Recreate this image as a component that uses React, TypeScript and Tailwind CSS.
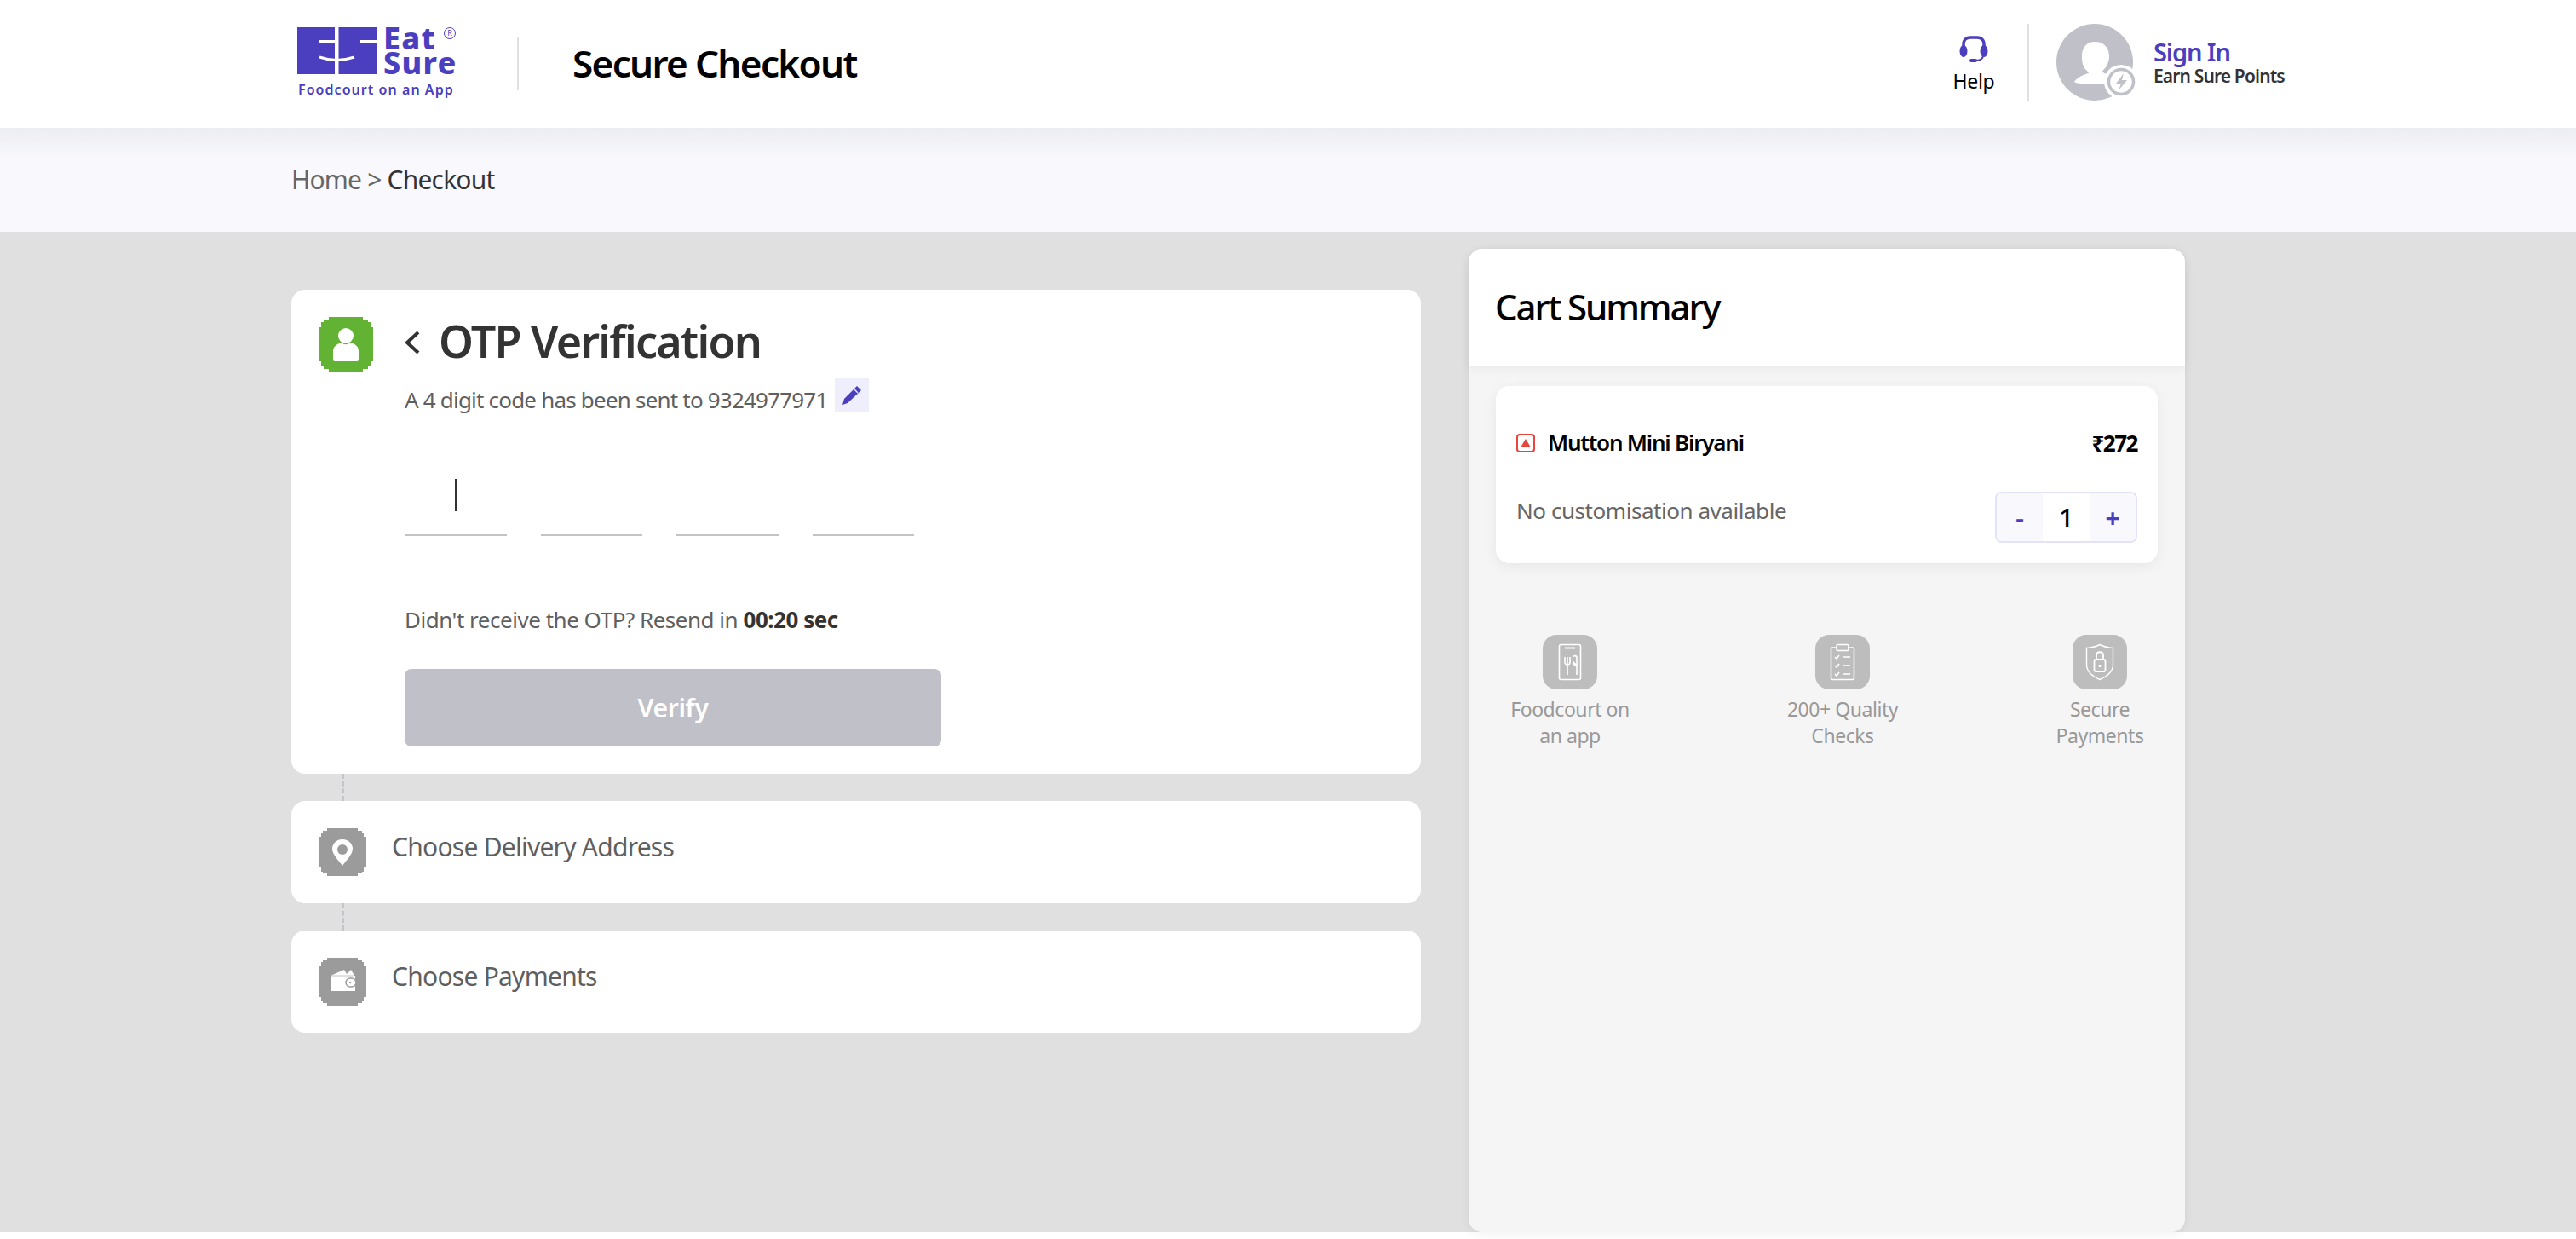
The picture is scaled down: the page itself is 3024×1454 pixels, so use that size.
import React from 'react';

const FONT = 'font-["Noto_Sans","Open_Sans",sans-serif]';

// stepped blob behind the section icons
function Blob({ color, size, children }: { color: string; size: string; children: React.ReactNode }) {
  return (
    <div className={`relative shrink-0 ${size}`}>
      <svg viewBox="0 0 100 100" className="absolute inset-0 h-full w-full" shapeRendering="crispEdges">
        <polygon
          fill={color}
          points="18,0 82,0 82,5 91,5 91,9 95,9 95,18 100,18 100,82 95,82 95,91 91,91 91,95 82,95 82,100 18,100 18,95 9,95 9,91 5,91 5,82 0,82 0,18 5,18 5,9 9,9 9,5 18,5"
        />
      </svg>
      {children}
    </div>
  );
}

function Logo() {
  return (
    <div className="mb-[4px] flex w-[190px] flex-col">
      <div className="flex items-start">
        <svg width="94" height="55" viewBox="0 0 94 55" className="shrink-0">
          <rect width="94" height="55" fill="#4b3fbf" />
          <rect x="44" width="4.5" height="55" fill="#fff" />
          <rect x="26" y="15" width="18" height="3" fill="#fff" />
          <rect x="74" y="15" width="20" height="3" fill="#fff" />
          <path d="M26 35 Q46 42 67 35" fill="none" stroke="#fff" strokeWidth="3" />
        </svg>
        <div className="relative ml-[7px] -mt-[2px] text-[36px] font-extrabold leading-[29px] tracking-[1.3px] text-[#4b3fbf]">
          <div>Eat</div>
          <div>Sure</div>
          <div className="absolute left-[71px] top-[2px] flex h-[14px] w-[14px] items-center justify-center rounded-full border border-[#4b3fbf] text-[9px] font-normal leading-none tracking-normal">
            R
          </div>
        </div>
      </div>
      <div className="mt-[7px] pl-[1px] text-[16px] font-semibold leading-[20px] tracking-[1.05px] text-[#4b3fbf]">
        Foodcourt on an App
      </div>
    </div>
  );
}

function Headset() {
  return (
    <svg width="34" height="32" viewBox="0 0 34 32" fill="none">
      <path d="M5 17V10C5 4.5 9 2 13 2H21C25 2 29 4.5 29 10V17" stroke="#4b3fbf" strokeWidth="3.5" />
      <ellipse cx="5" cy="18" rx="4.5" ry="7" fill="#4b3fbf" />
      <ellipse cx="29" cy="18" rx="4.5" ry="7" fill="#4b3fbf" />
      <path d="M28 24C27 28 24 29 19 29" stroke="#4b3fbf" strokeWidth="2" />
      <rect x="12" y="27" width="9" height="4" rx="2" fill="#4b3fbf" />
    </svg>
  );
}

function Avatar() {
  return (
    <svg width="94" height="90" viewBox="0 0 94 90" className="shrink-0">
      <circle cx="45" cy="45" r="45" fill="#bfc0c8" />
      <path
        d="M45 21C55 21 62 27 62 38C62 46 58 52 54 55L56 58C65 60 72 63 75 68C65 71 25 72 21 68C24 63 33 59 38 58L36 55C31 51 30 45 30 38C30 27 36 21 45 21Z"
        fill="#fff"
      />
      <circle cx="76" cy="68" r="20" fill="#fff" />
      <circle cx="76" cy="68" r="14.5" fill="none" stroke="#bfc0c8" strokeWidth="3.5" />
      <path d="M79 58L70 70H76L73 78L83 66H77Z" fill="#bfc0c8" />
    </svg>
  );
}

function StepCard({ label, icon }: { label: string; icon: React.ReactNode }) {
  return (
    <div className="relative flex h-[120px] items-start rounded-2xl bg-white pl-[32px] pt-[32px]">
      <Blob color="#9b9b9b" size="h-[56px] w-[56px]">
        {icon}
      </Blob>
      <div className="ml-[30px] -mt-[1px] text-[30px] leading-[46px] tracking-[-0.75px] text-[#5f5f5f]">{label}</div>
      <div className="absolute left-[60px] top-[-32px] h-[32px] border-l-2 border-dashed border-[#c4c4cc]" />
    </div>
  );
}

function Feature({ label, second, icon, className }: { label: string; second: string; icon: React.ReactNode; className: string }) {
  return (
    <div className={`flex w-[160px] flex-col items-center text-center ${className}`}>
      <div className="flex h-16 w-16 items-center justify-center rounded-2xl bg-[#bdbdbd]">{icon}</div>
      <div className="mt-[8px] text-[23px] leading-[31px] tracking-[-0.45px] text-[#999]">
        <div>{label}</div>
        <div>{second}</div>
      </div>
    </div>
  );
}

export default function App() {
  return (
    <div className={`h-[1454px] overflow-hidden bg-white ${FONT}`}>
      {/* top bar */}
      <header className="flex h-[150px] items-center pl-[349px] pr-[343px]">
        <Logo />
        <div className="ml-[68px] h-[62px] w-[2px] bg-[#e0e0e0]" />
        <h1 className="ml-[63px] -mt-[2px] text-[44px] font-semibold leading-none tracking-[-1.65px] text-black">Secure Checkout</h1>
        <div className="ml-auto flex w-[94px] flex-col items-center">
          <Headset />
          <div className="mt-[7px] text-[23px] leading-[28px] tracking-[-0.3px] text-black">Help</div>
        </div>
        <div className="ml-[16px] -mt-[4px] h-[90px] w-[2px] bg-[#e0e0e0]" />
        <div className="ml-[32px] -mt-[4px] flex items-center">
          <Avatar />
          <div className="ml-[20px] w-[153px] whitespace-nowrap">
            <div className="text-[29px] font-semibold leading-[32px] tracking-[-1.1px] text-[#4b3fbf]">Sign In</div>
            <div className="text-[21px] font-semibold leading-[24px] tracking-[-0.85px] text-[#333]">Earn Sure Points</div>
          </div>
        </div>
      </header>

      {/* breadcrumb */}
      <div className="flex h-[122px] items-center bg-gradient-to-b from-[#ecedf2] via-[#f8f8fd] via-30% to-[#f8f8fd] pb-[2px] pl-[342px] text-[30px] tracking-[-0.8px]">
        <span className="text-[#666]">Home &gt;&nbsp;</span>
        <span className="text-[#333]">Checkout</span>
      </div>

      <main className="flex h-[1174px] gap-[56px] bg-[#e0e0e0] pl-[342px]">
        {/* left column */}
        <div className="flex w-[1326px] flex-col gap-[32px] pt-[68px]">
          <section className="h-[568px] rounded-2xl bg-white pl-[32px] pt-[32px]">
            <div className="flex">
              <Blob color="#62b233" size="h-16 w-16">
                <svg viewBox="0 0 64 64" className="absolute inset-0 h-full w-full">
                  <circle cx="32" cy="22" r="9" fill="#fff" />
                  <path d="M17 50V40C17 34 23 31 27 30C30 33 34 33 37 30C42 31 47 34 47 40V50C47 51 46 52 45 52H19C18 52 17 51 17 50Z" fill="#fff" />
                </svg>
              </Blob>
              <div className="ml-[37px] -mt-[8px] flex flex-col">
                <div className="flex items-center">
                  <svg width="18" height="28" viewBox="0 0 18 28" fill="none" className="mt-[4px]">
                    <path d="M16 2L3 14L16 26" stroke="#333" strokeWidth="4" />
                  </svg>
                  <h2 className="ml-[22px] text-[52px] font-semibold leading-[72px] tracking-[-1.7px] text-[#333]">OTP Verification</h2>
                </div>
                <div className="flex items-start">
                  <div className="mt-[15px] text-[26px] leading-[36px] tracking-[-0.8px] text-[#5f5f5f]">A 4 digit code has been sent to 9324977971</div>
                  <div className="ml-[8px] mt-[8px] flex h-[40px] w-[40px] items-center justify-center bg-[#eeeefc]">
                    <svg width="24" height="24" viewBox="0 0 24 24">
                      <path d="M18 1L23 6L7 21L1 23L3 16Z" fill="#4b3fbf" />
                      <path d="M15 5L19 9" stroke="#eeeefc" strokeWidth="1.5" />
                    </svg>
                  </div>
                </div>
              </div>
            </div>

            <div className="ml-[101px]">
              <div className="mt-[73px] flex gap-[40px]">
                <div className="relative h-[69px] w-[120px] border-b-2 border-[#c4c4c4]">
                  <div className="absolute left-[59px] top-[2px] h-[38px] w-[2px] bg-[#333]" />
                </div>
                <div className="h-[69px] w-[119px] border-b-2 border-[#c4c4c4]" />
                <div className="h-[69px] w-[120px] border-b-2 border-[#c4c4c4]" />
                <div className="h-[69px] w-[119px] border-b-2 border-[#c4c4c4]" />
              </div>
              <div className="mt-[80px] text-[26px] leading-[36px] tracking-[-0.48px] text-[#5f5f5f]">
                Didn't receive the OTP? Resend in <span className="font-bold text-[#333]">00:20 sec</span>
              </div>
              <button className="mt-[40px] flex h-[91px] w-[630px] items-center justify-center rounded-lg bg-[#bfc0c8] text-[30px] font-semibold tracking-[-0.3px] text-white">
                Verify
              </button>
            </div>
          </section>

          <StepCard
            label="Choose Delivery Address"
            icon={
              <svg viewBox="0 0 56 56" className="absolute inset-0 h-full w-full">
                <path d="M28 13C20 13 16 19 16 24C16 31 24 38 28 44C32 38 40 31 40 24C40 19 36 13 28 13Z" fill="#fff" />
                <circle cx="28" cy="25" r="6" fill="#9b9b9b" />
              </svg>
            }
          />
          <StepCard
            label="Choose Payments"
            icon={
              <svg viewBox="0 0 56 56" className="absolute inset-0 h-full w-full">
                <path d="M14 21L30 14L33 19L38 14L42 21H43V39H14Z" fill="#fff" />
                <path d="M14 21H42" stroke="#9b9b9b" strokeWidth="0.6" />
                <rect x="32" y="24" width="12" height="10" rx="5" fill="#fff" stroke="#9b9b9b" strokeWidth="1.5" />
                <circle cx="37" cy="29" r="1.2" fill="#9b9b9b" />
              </svg>
            }
          />
        </div>

        {/* cart summary */}
        <aside className="mt-[20px] h-[1154px] w-[841px] rounded-2xl bg-[#f5f5f5] shadow-[0_2px_12px_rgba(0,0,0,0.06)]">
          <div className="flex h-[137px] items-center rounded-t-2xl bg-white pl-[31px] shadow-[0_4px_14px_rgba(0,0,0,0.05)]">
            <h3 className="-mt-[2px] text-[42px] font-medium leading-none tracking-[-2.1px] text-black">Cart Summary</h3>
          </div>
          <div className="mx-[32px] mt-[24px] h-[208px] rounded-2xl bg-white px-[24px] pt-[54px] shadow-[0_4px_16px_rgba(0,0,0,0.06)]">
            <div className="flex items-center justify-between">
              <div className="flex items-center">
                <div className="flex h-[22px] w-[22px] items-center justify-center rounded-[4px] border-2 border-[#e8453c]">
                  <div className="h-0 w-0 border-x-[6px] border-b-[10px] border-x-transparent border-b-[#e8453c]" />
                </div>
                <div className="ml-[15px] -mt-[2px] text-[26px] font-semibold leading-[26px] tracking-[-1.2px] text-black">Mutton Mini Biryani</div>
              </div>
              <div className="text-[26px] font-bold leading-[26px] tracking-[-1.5px] text-black">₹272</div>
            </div>
            <div className="mt-[44px] flex items-start justify-between">
              <div className="mt-[4px] text-[26px] leading-[36px] tracking-[-0.45px] text-[#666]">No customisation available</div>
              <div className="flex h-[60px] w-[167px] items-stretch overflow-hidden rounded-lg border-2 border-[#e2e2fa]">
                <div className="flex w-[54px] items-center justify-center bg-[#f8f8fd] text-[30px] font-bold text-[#4b3fbf]">-</div>
                <div className="flex flex-1 items-center justify-center bg-white text-[30px] font-medium text-black">1</div>
                <div className="flex w-[54px] items-center justify-center bg-[#f8f8fd] text-[30px] font-bold text-[#4b3fbf]">+</div>
              </div>
            </div>
          </div>

          <div className="mt-[84px] flex">
            <Feature
              label="Foodcourt on"
              second="an app"
              className="ml-[39px]"
              icon={
                <svg width="28" height="44" viewBox="0 0 28 44" fill="none" stroke="#fff" strokeWidth="1.6">
                  <rect x="1.5" y="1.5" width="25" height="41" rx="2" />
                  <path d="M8 5.5H20" strokeWidth="2" />
                  <path d="M8 16V22C8 24 9.5 25 11 25C12.5 25 14 24 14 22V16M11 16V37" />
                  <path d="M18 16C18 14 22 14 22 17V37M22 26C19 26 18 24 18 22Z" />
                </svg>
              }
            />
            <Feature
              label="200+ Quality"
              second="Checks"
              className="ml-[160px]"
              icon={
                <svg width="30" height="44" viewBox="0 0 30 44" fill="none" stroke="#fff" strokeWidth="1.6">
                  <path d="M9 5H3C2 5 1.5 5.5 1.5 6.5V41C1.5 42 2 42.5 3 42.5H27C28 42.5 28.5 42 28.5 41V6.5C28.5 5.5 28 5 27 5H21" />
                  <rect x="8" y="1.5" width="14" height="7" rx="1.5" />
                  <path d="M6 16L8 18L11 14M15 16H24M6 26L8 28L11 24M15 26H24M6 36L8 38L11 34M15 36H24" />
                </svg>
              }
            />
            <Feature
              label="Secure"
              second="Payments"
              className="ml-[142px]"
              icon={
                <svg width="36" height="44" viewBox="0 0 36 44" fill="none" stroke="#fff" strokeWidth="1.4">
                  <path d="M18 1.5C23 4 28 5 33.5 5.5V25C33.5 33 26 39 18 42.5C10 39 2.5 33 2.5 25V5.5C8 5 13 4 18 1.5Z" />
                  <rect x="11.5" y="19" width="13" height="14" rx="2" strokeWidth="1.8" />
                  <path d="M14 19V14C14 9 22 9 22 14V19" strokeWidth="1.8" />
                  <path d="M18 25V28" strokeWidth="2.4" />
                </svg>
              }
            />
          </div>
        </aside>
      </main>
    </div>
  );
}
